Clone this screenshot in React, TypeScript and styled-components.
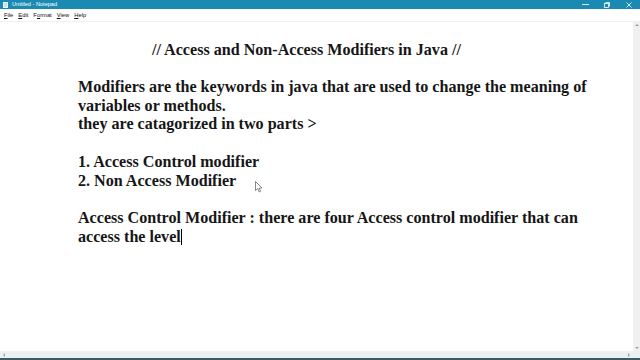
import React from "react";
import styled, { createGlobalStyle } from "styled-components";

const GlobalStyle = createGlobalStyle`
    html, body {
        margin: 0;
        padding: 0;
        width: 640px;
        height: 360px;
        overflow: hidden;
        background: #ffffff;
    }
    #root {
        width: 640px;
        height: 360px;
    }
`;

const Window = styled.div`
    width: 640px;
    height: 360px;
    display: flex;
    flex-direction: column;
    font-family: "Liberation Sans", "DejaVu Sans", sans-serif;
    position: relative;
`;

const TitleBar = styled.div`
    height: 9px;
    background: #1b8ab3;
    display: flex;
    align-items: center;
    color: #ffffff;
    font-size: 5.6px;
    padding-left: 3px;
`;

const AppIcon = styled.div`
    width: 5px;
    height: 6px;
    background: #bfe6f5;
    border: 1px solid #e8f7fd;
    box-sizing: border-box;
    margin-right: 4px;
`;

const TitleText = styled.span`
    flex: 1;
    line-height: 9px;
`;

const Controls = styled.div`
    display: flex;
    height: 100%;
`;

const ControlButton = styled.div`
    width: 22px;
    height: 9px;
    display: flex;
    align-items: center;
    justify-content: center;
`;

const MenuBar = styled.div`
    height: 12px;
    background: #ffffff;
    display: flex;
    align-items: center;
    gap: 5px;
    padding-left: 4px;
    font-size: 5.8px;
    color: #111111;
    border-bottom: 1px solid #f0f0f0;
`;

const MenuItem = styled.span`
    u {
        text-decoration: underline;
    }
`;

const Body = styled.div`
    flex: 1;
    display: flex;
    min-height: 0;
`;

const Editor = styled.div`
    flex: 1;
    padding: 0 0 0 78px;
    font-family: "Liberation Serif", "DejaVu Serif", serif;
    font-weight: bold;
    font-size: 16.1px;
    line-height: 18.7px;
    color: #161616;
    white-space: pre;
`;

const Line = styled.div<{ $indent?: number }>`
    height: 18.7px;
    padding-left: ${(p) => p.$indent ?? 0}px;
`;

const Caret = styled.span`
    display: inline-block;
    width: 1px;
    height: 16px;
    background: #000000;
    vertical-align: -3px;
`;

const VScroll = styled.div`
    width: 7px;
    background: #f0f0f0;
    display: flex;
    flex-direction: column;
    justify-content: space-between;
    align-items: center;
    padding: 2px 0;
    box-sizing: border-box;
`;

const HScroll = styled.div`
    height: 7px;
    background: #ecf0f0;
    display: flex;
    justify-content: space-between;
    align-items: center;
    padding: 0 10px 0 3px;
`;

const Arrow = styled.div<{ $dir: "up" | "down" | "left" | "right" }>`
    width: 0;
    height: 0;
    border: 2px solid transparent;
    ${(p) =>
        p.$dir === "up"
            ? "border-bottom-color: #a0a0a0; border-top-width: 0;"
            : p.$dir === "down"
            ? "border-top-color: #a0a0a0; border-bottom-width: 0;"
            : p.$dir === "left"
            ? "border-right-color: #a0a0a0; border-left-width: 0;"
            : "border-left-color: #a0a0a0; border-right-width: 0;"}
`;

const Taskbar = styled.div`
    height: 2px;
    background: #3e5a64;
`;

const Pointer = styled.svg`
    position: absolute;
    left: 255px;
    top: 181px;
`;

const Notepad = () => (
    <Window>
        <TitleBar>
            <AppIcon />
            <TitleText>Untitled - Notepad</TitleText>
            <Controls>
                <ControlButton>
                    <svg width="7" height="5" viewBox="0 0 7 5">
                        <line x1="0" y1="2.5" x2="7" y2="2.5" stroke="#fff" strokeWidth="0.8" />
                    </svg>
                </ControlButton>
                <ControlButton>
                    <svg width="6" height="6" viewBox="0 0 6 6">
                        <rect x="0.5" y="1.5" width="4" height="4" fill="none" stroke="#fff" strokeWidth="0.8" />
                        <path d="M1.5 0.5 H5.5 V4.5" fill="none" stroke="#fff" strokeWidth="0.8" />
                    </svg>
                </ControlButton>
                <ControlButton>
                    <svg width="6" height="6" viewBox="0 0 6 6">
                        <path d="M0.5 0.5 L5.5 5.5 M5.5 0.5 L0.5 5.5" stroke="#fff" strokeWidth="0.8" />
                    </svg>
                </ControlButton>
            </Controls>
        </TitleBar>
        <MenuBar>
            <MenuItem><u>F</u>ile</MenuItem>
            <MenuItem><u>E</u>dit</MenuItem>
            <MenuItem>F<u>o</u>rmat</MenuItem>
            <MenuItem><u>V</u>iew</MenuItem>
            <MenuItem><u>H</u>elp</MenuItem>
        </MenuBar>
        <Body>
            <Editor>
                <Line />
                <Line $indent={74}>// Access and Non-Access Modifiers in Java //</Line>
                <Line />
                <Line>Modifiers are the keywords in java that are used to change the meaning of</Line>
                <Line>variables or methods.</Line>
                <Line>they are catagorized in two parts &gt;</Line>
                <Line />
                <Line>1. Access Control modifier</Line>
                <Line>2. Non Access Modifier</Line>
                <Line />
                <Line>Access Control Modifier : there are four Access control modifier that can</Line>
                <Line>access the level<Caret /></Line>
            </Editor>
            <VScroll>
                <Arrow $dir="up" />
                <Arrow $dir="down" />
            </VScroll>
        </Body>
        <HScroll>
            <Arrow $dir="left" />
            <Arrow $dir="right" />
        </HScroll>
        <Taskbar />
        <Pointer width="8" height="12" viewBox="0 0 8 12">
            <path d="M0.5 0.5 L0.5 9.5 L2.7 7.6 L4.3 11 L5.6 10.4 L4.1 7.1 L7 7 Z" fill="#fff" stroke="#555" strokeWidth="0.7" />
        </Pointer>
    </Window>
);

const App = () => (
    <>
        <GlobalStyle />
        <Notepad />
    </>
);

export default App;
